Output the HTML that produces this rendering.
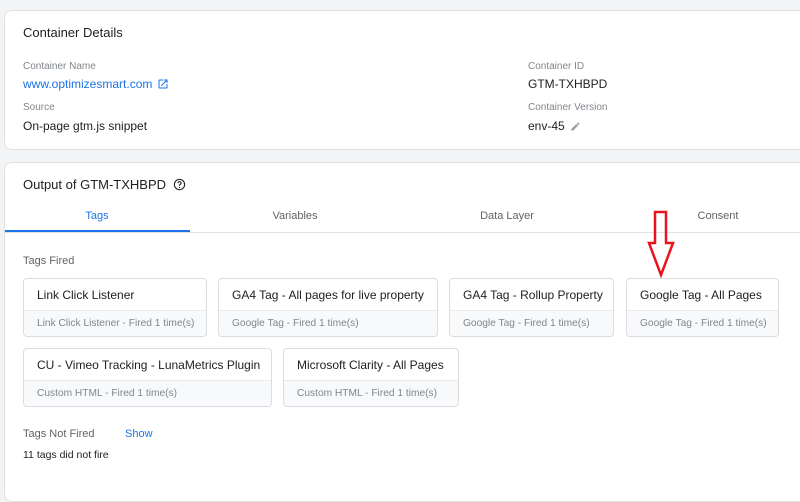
<!DOCTYPE html>
<html><head><meta charset="utf-8"><style>
*{margin:0;padding:0;box-sizing:border-box}
body{width:800px;height:477px;background:#f1f3f4;font-family:"Liberation Sans",Arial,sans-serif;position:relative;overflow:hidden;color:#202124}
.card{position:absolute;background:#fff;border:1px solid #e0e0e0;border-radius:8px}
.a{position:absolute;white-space:nowrap}
.lbl{font-size:10px;color:#80868b}
.val{font-size:12px;color:#202124}
.tag{position:absolute;border:1px solid #dadce0;border-radius:4px;background:#fff;overflow:hidden}
.tag .t{height:32px;line-height:32px;padding-left:13px;font-size:12px;color:#202124;border-bottom:1px solid #e8eaed;white-space:nowrap}
.tag .f{height:25px;line-height:25px;padding-left:13px;font-size:10.2px;color:#80868b;background:#f8f9fa;white-space:nowrap}
.tab{position:absolute;top:210px;font-size:11px;color:#5f6368;transform:translateX(-50%)}
</style></head><body>
<div class="card" style="left:4px;top:10px;width:820px;height:140px"></div>
<div class="a" style="left:23px;top:25px;font-size:13px">Container Details</div>
<div class="a lbl" style="left:23px;top:61px">Container Name</div>
<div class="a val" style="left:23px;top:77px;color:#1a73e8">www.optimizesmart.com</div>
<svg class="a" style="left:157px;top:78px" width="12" height="12" viewBox="0 0 24 24"><path d="M19 19H5V5h7V3H5a2 2 0 0 0-2 2v14a2 2 0 0 0 2 2h14a2 2 0 0 0 2-2v-7h-2v7zM14 3v2h3.6l-9.8 9.8 1.4 1.4L19 6.4V10h2V3h-7z" fill="#1a73e8"/></svg>
<div class="a lbl" style="left:23px;top:102px">Source</div>
<div class="a val" style="left:23px;top:119px">On-page gtm.js snippet</div>
<div class="a lbl" style="left:528px;top:61px">Container ID</div>
<div class="a val" style="left:528px;top:77px">GTM-TXHBPD</div>
<div class="a lbl" style="left:528px;top:102px">Container Version</div>
<div class="a val" style="left:528px;top:119px">env-45</div>
<svg class="a" style="left:570px;top:121px" width="11" height="11" viewBox="0 0 24 24"><path d="M3 17.25V21h3.75L17.8 9.94l-3.75-3.75L3 17.25zM20.7 7.04a1 1 0 0 0 0-1.41l-2.34-2.34a1 1 0 0 0-1.41 0l-1.83 1.83 3.75 3.75 1.83-1.83z" fill="#9aa0a6"/></svg>

<div class="card" style="left:4px;top:162px;width:820px;height:340px"></div>
<div class="a" style="left:23px;top:177px;font-size:13px">Output of GTM-TXHBPD</div>
<svg class="a" style="left:173px;top:178px" width="13" height="13" viewBox="0 0 24 24"><circle cx="12" cy="12" r="9.5" fill="none" stroke="#202124" stroke-width="2"/><path d="M9.2 9.5a2.8 2.8 0 1 1 3.8 2.6c-.7.3-1 .8-1 1.6v.6" fill="none" stroke="#202124" stroke-width="2"/><circle cx="12" cy="17.3" r="1.2" fill="#202124"/></svg>
<div class="a" style="left:5px;top:232px;width:795px;height:1px;background:#e0e0e0"></div>
<div class="a" style="left:5px;top:230px;width:185px;height:2px;background:#1a73e8"></div>
<div class="tab" style="left:97px;color:#1a73e8">Tags</div>
<div class="tab" style="left:295px">Variables</div>
<div class="tab" style="left:507px">Data Layer</div>
<div class="tab" style="left:718px">Consent</div>

<div class="a" style="left:23px;top:255px;font-size:11px;color:#5f6368">Tags Fired</div>
<div class="tag" style="left:23px;top:278px;width:184px"><div class="t">Link Click Listener</div><div class="f">Link Click Listener - Fired 1 time(s)</div></div>
<div class="tag" style="left:218px;top:278px;width:220px"><div class="t">GA4 Tag - All pages for live property</div><div class="f">Google Tag - Fired 1 time(s)</div></div>
<div class="tag" style="left:449px;top:278px;width:165px"><div class="t">GA4 Tag - Rollup Property</div><div class="f">Google Tag - Fired 1 time(s)</div></div>
<div class="tag" style="left:626px;top:278px;width:153px"><div class="t">Google Tag - All Pages</div><div class="f">Google Tag - Fired 1 time(s)</div></div>
<div class="tag" style="left:23px;top:348px;width:249px"><div class="t">CU - Vimeo Tracking - LunaMetrics Plugin</div><div class="f">Custom HTML - Fired 1 time(s)</div></div>
<div class="tag" style="left:283px;top:348px;width:176px"><div class="t">Microsoft Clarity - All Pages</div><div class="f">Custom HTML - Fired 1 time(s)</div></div>

<div class="a" style="left:23px;top:428px;font-size:11px;color:#5f6368">Tags Not Fired</div>
<div class="a" style="left:125px;top:428px;font-size:11px;color:#1a73e8">Show</div>
<div class="a" style="left:23px;top:449px;font-size:10.5px;color:#202124">11 tags did not fire</div>

<svg class="a" style="left:640px;top:205px" width="45" height="80" viewBox="640 205 45 80"><path d="M655 212h11v31h7l-12 32l-12-32h6z" fill="none" stroke="#e8141c" stroke-width="2.5" stroke-linejoin="miter"/></svg>
</body></html>
